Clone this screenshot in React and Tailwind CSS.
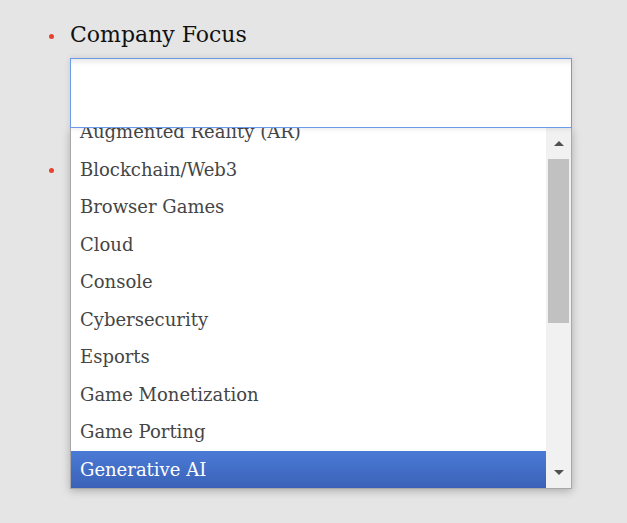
import React from "react";

const options = [
  "Augmented Reality (AR)",
  "Blockchain/Web3",
  "Browser Games",
  "Cloud",
  "Console",
  "Cybersecurity",
  "Esports",
  "Game Monetization",
  "Game Porting",
  "Generative AI",
];

export default function App() {
  return (
    <div
      className="w-full h-[523px] bg-[#e5e5e5] overflow-hidden"
      style={{ fontFamily: '"DejaVu Serif", serif' }}
    >
      <ul className="pl-[70px] pt-[20px] w-[572px]">
        <li className="relative z-10">
          <span className="absolute left-[-21px] top-[14px] w-[5px] h-[5px] rounded-full bg-[#e8412c]" />
          <div className="text-[22px] leading-[30px] text-[#111]">Company Focus</div>
          <div className="relative mt-[8px]">
            <div className="h-[70px] bg-white border border-[#6d9ae6] shadow-[inset_0_6px_6px_-4px_rgba(0,0,0,0.12),0_0_6px_rgba(0,0,0,0.12)] relative z-10" />
            <div className="absolute left-0 right-0 top-full h-[361px] bg-white border-x border-b border-[#a8a8a8] shadow-[0_2px_8px_rgba(0,0,0,0.25)] flex overflow-hidden">
              <div className="flex-1 overflow-hidden">
                <div className="mt-[-15px]">
                  {options.map((o) => {
                    const sel = o === "Generative AI";
                    return (
                      <div
                        key={o}
                        className={
                          "h-[37.5px] flex items-center pl-[9px] text-[18px] " +
                          (sel
                            ? "bg-gradient-to-b from-[#4b7bd6] to-[#3a61b7] text-white"
                            : "text-[#454545]")
                        }
                      >
                        {o}
                      </div>
                    );
                  })}
                </div>
              </div>
              <div className="w-[25px] bg-[#f1f1f1] flex flex-col items-center">
                <div className="h-[31px] flex items-center justify-center">
                  <svg width="10" height="6" viewBox="0 0 10 6">
                    <path d="M5 0 L10 5 L0 5 Z" fill="#505050" />
                  </svg>
                </div>
                <div className="w-[21px] h-[164px] bg-[#c1c1c1]" />
                <div className="flex-1" />
                <div className="h-[30px] flex items-center justify-center">
                  <svg width="10" height="6" viewBox="0 0 10 6">
                    <path d="M0 0 L10 0 L5 5 Z" fill="#505050" />
                  </svg>
                </div>
              </div>
            </div>
          </div>
        </li>
        <li className="relative mt-[28px] h-[30px]">
          <span className="absolute left-[-21px] top-[12px] w-[5px] h-[5px] rounded-full bg-[#e8412c]" />
        </li>
      </ul>
    </div>
  );
}
